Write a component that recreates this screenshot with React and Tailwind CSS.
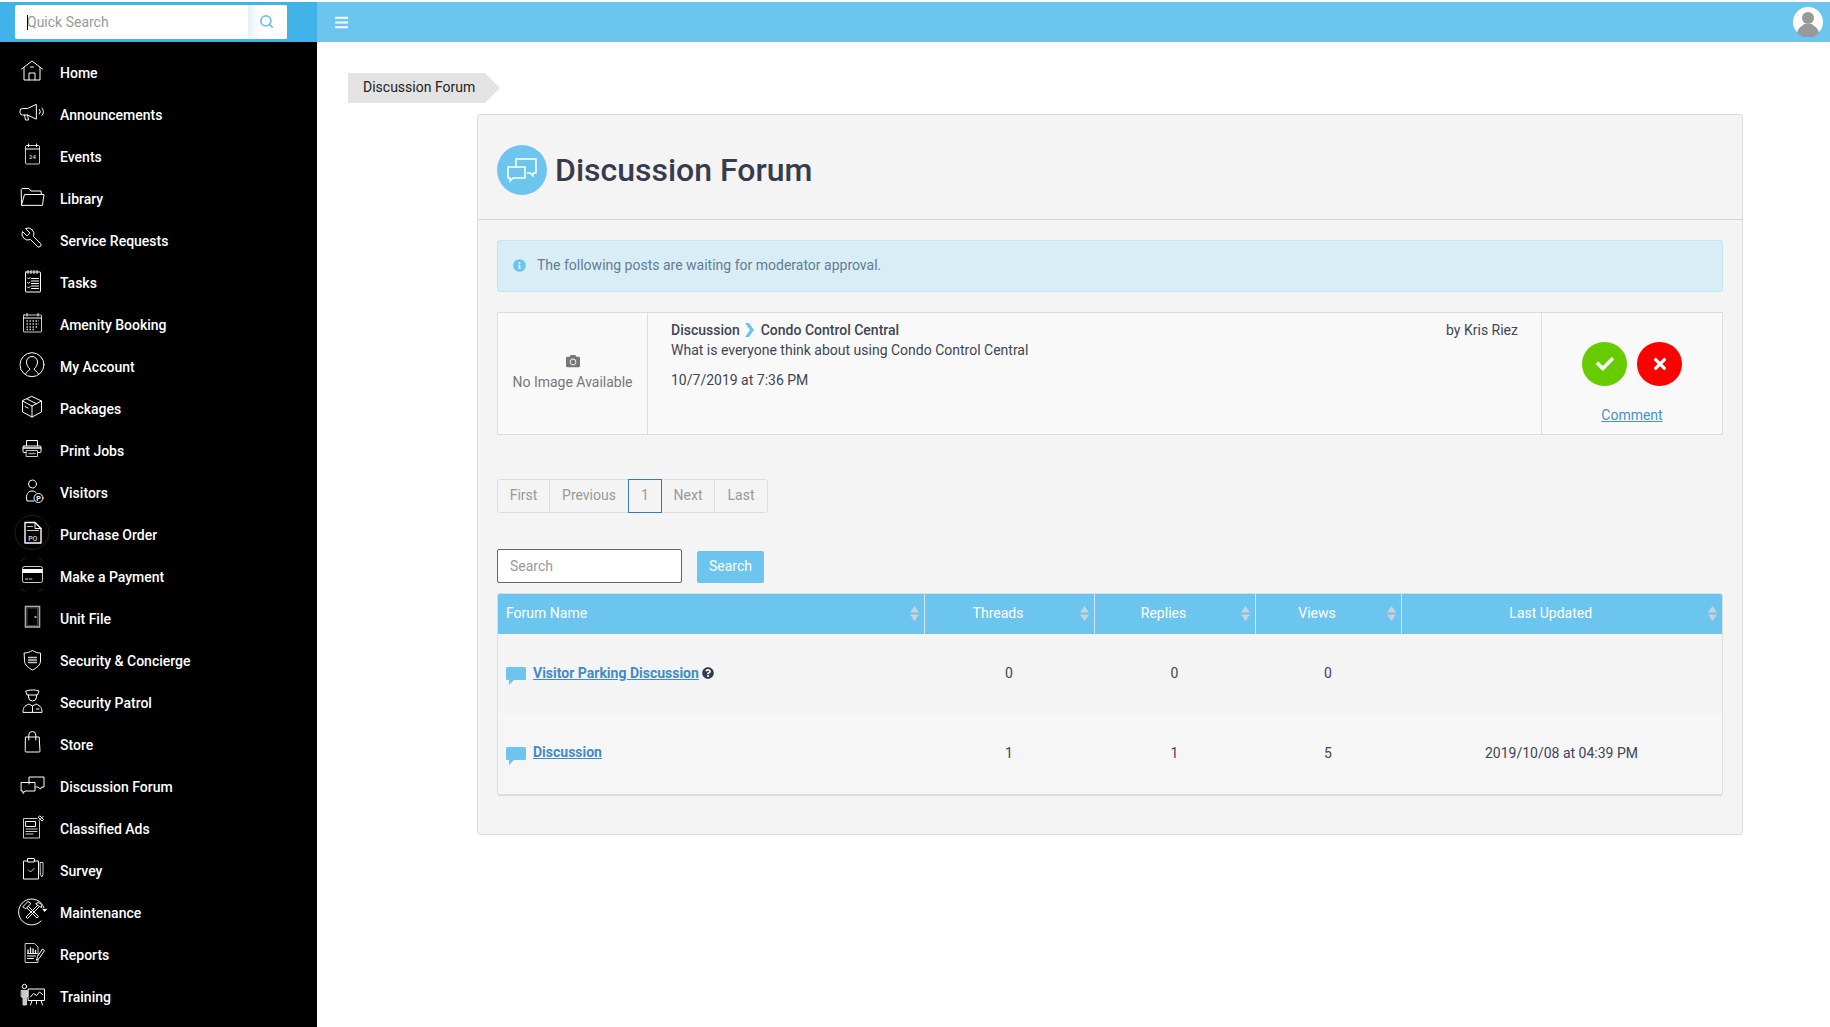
import { Search } from "lucide-react";
import {
  FaBars,
  FaCamera,
  FaCheck,
  FaInfoCircle,
  FaQuestionCircle,
  FaTimes,
} from "react-icons/fa";

const Ico = ({ children }) => (
  <svg
    width="32"
    height="32"
    viewBox="0 0 32 32"
    fill="none"
    stroke="#fff"
    strokeWidth="1"
    strokeLinejoin="round"
    strokeLinecap="round"
    className="shrink-0 -translate-y-[2px] overflow-visible"
  >
    {children}
  </svg>
);

const tiny = { fontFamily: "Roboto, sans-serif", stroke: "none", fill: "#ddd" };

const menu = [
  {
    label: "Home",
    icon: (
      <>
        <path d="M5.500 14 16 6l10.500 8" />
        <path d="M8 12.500V25h16V12.500" />
        <path d="M13 25v-7h6v7M14.500 12h3" />
      </>
    ),
  },
  {
    label: "Announcements",
    icon: (
      <>
        <path d="M20 7.500 11.500 11.500H6.500a2.500 2.500 0 0 0-2.500 2.500v1.500a2.500 2.500 0 0 0 2.500 2.500h5l8.500 4z" />
        <path d="M8.500 18l1 5h3l-1-5" />
        <path d="M23.500 12.500a3.500 3.500 0 0 1 0 4.500M26 11a6 6 0 0 1 0 7.500" />
      </>
    ),
  },
  {
    label: "Events",
    icon: (
      <>
        <rect x="9.500" y="6.500" width="14" height="18.500" rx="1" stroke="#ccc" />
        <path d="M9.500 10h14M12.500 5v2.500M20.500 5v2.500" />
        <text x="16.500" y="20" fontSize="6" textAnchor="middle" style={tiny}>
          24
        </text>
      </>
    ),
  },
  {
    label: "Library",
    icon: (
      <>
        <path d="M5.500 24 5.200 8.500 6 7.500h7l2 2.500h10l.5 3.500" />
        <path d="M5.500 24 8.500 13.500H28L26.500 24z" />
      </>
    ),
  },
  {
    label: "Service Requests",
    icon: (
      <path
        transform="translate(28 3) scale(-1 1)"
        d="M14.700 6.300a1 1 0 0 0 0 1.400l1.600 1.600a1 1 0 0 0 1.400 0l3.770-3.770a6 6 0 0 1-7.940 7.940l-6.910 6.910a2.120 2.120 0 0 1-3-3l6.910-6.910a6 6 0 0 1 7.940-7.940l-3.760 3.760z"
      />
    ),
  },
  {
    label: "Tasks",
    icon: (
      <>
        <rect x="9.500" y="7" width="15" height="20" rx="0.500" />
        <path d="M12 5.500v3M15 5.500v3M18 5.500v3M21 5.500v3" />
        <path d="M11.500 13l1 1 1.500-1.500M11.500 17.500l1 1 1.500-1.500M11.500 22l1 1 1.500-1.500" />
        <path d="M15.500 13.500h7M15.500 16h7M15.500 18.500h7M15.500 21h7M15.500 23.500h7" />
      </>
    ),
  },
  {
    label: "Amenity Booking",
    icon: (
      <>
        <rect x="7.500" y="8" width="18" height="17" rx="0.500" stroke="#ccc" />
        <path d="M7.500 11h18M11 6.500v2.500M22 6.500v2.500" />
        <path
          d="M10.500 14h1.500M13.500 14h1.500M16.500 14h1.500M19.500 14h1.500M22.500 14h.5M10.500 17h1.500M13.500 17h1.500M16.500 17h1.500M19.500 17h1.500M22.500 17h.5M10.500 20h1.500M13.500 20h1.500M16.500 20h1.500M19.500 20h1.500M10.500 22.500h1.500M13.500 22.500h1.500M16.500 22.500h1.500"
          stroke="#ccc"
          strokeWidth="1.500"
          strokeLinecap="butt"
        />
      </>
    ),
  },
  {
    label: "My Account",
    icon: (
      <>
        <circle cx="16" cy="15.700" r="12" />
        <path d="M9.500 25c.5-2.500 4-3 4.500-5-2-2-3.500-4-3.500-7a5.500 5.500 0 0 1 11 0c0 3-1.500 5-3.500 7 .5 2 4 2.500 4.500 5" />
      </>
    ),
  },
  {
    label: "Packages",
    icon: (
      <>
        <path d="M16 5.500 25.500 10v11L16 26l-9.500-5V10z" />
        <path d="M6.500 10 16 15l9.500-5M16 15v11M11 8l9.500 4.800" />
        <path d="M9 15.500l3 1.500" />
      </>
    ),
  },
  {
    label: "Print Jobs",
    icon: (
      <>
        <path d="M10.500 13V7.500h11V13" />
        <rect x="7" y="13" width="18" height="6.500" rx="1" />
        <path d="M7.500 15h17" strokeWidth="1.500" />
        <rect x="10.500" y="17.500" width="11" height="6" fill="#000" stroke="#ccc" />
        <path d="M13 20.500h6" stroke="#999" strokeWidth="1.500" />
      </>
    ),
  },
  {
    label: "Visitors",
    icon: (
      <>
        <circle cx="16.500" cy="9" r="4" />
        <path d="M18 26h-7l-.5-3c0-5 2.500-7 5.500-7 1.500 0 3 .5 4 1.500" />
        <circle cx="22.500" cy="23" r="4.500" fill="#000" />
        <text x="22.500" y="25.500" fontSize="7" fontWeight="700" textAnchor="middle" style={{ ...tiny, fill: "#fff" }}>
          P
        </text>
      </>
    ),
  },
  {
    label: "Purchase Order",
    icon: (
      <>
        <circle cx="16" cy="15.500" r="17" stroke="#222" strokeDasharray="2 1" />
        <path d="M9 5.500h10l6 6V26H9z" strokeWidth="1.400" />
        <path d="M19 5.500v6h6" />
        <path d="M11.500 9.500h5M11.500 13.500h11" strokeWidth="1.200" stroke="#ccc" />
        <text x="16.800" y="23.500" fontSize="7" textAnchor="middle" style={tiny}>
          PO
        </text>
      </>
    ),
  },
  {
    label: "Make a Payment",
    icon: (
      <>
        <path d="M5 2 9 -1M27 2l-4-3M5 30l4 3M27 30l-4 3" stroke="#222" />
        <rect x="6.500" y="7.500" width="20" height="16" rx="2" stroke="#ccc" />
        <rect x="6.500" y="10" width="20" height="4" fill="#fff" stroke="none" />
        <path d="M9.500 20h2.500M13.500 20h2.500" stroke="#ccc" />
      </>
    ),
  },
  {
    label: "Unit File",
    icon: (
      <>
        <rect x="9.500" y="5.500" width="14" height="20.500" stroke="#aaa" strokeWidth="1.600" strokeLinejoin="miter" />
        <rect x="11.500" y="7" width="10" height="17.500" stroke="#444" />
        <path d="M18.500 16h2" strokeWidth="1.300" strokeLinecap="butt" />
      </>
    ),
  },
  {
    label: "Security & Concierge",
    icon: (
      <>
        <path d="M8.500 10c3 0 5.500-1 8-2.500 2.500 1.500 5 2.500 8 2.500v8c0 4-4 7-8 9-4-2-8-5-8-9z" />
        <path d="M12.500 14.500h8M12.500 17h8M12.500 19.500h8" strokeWidth="1.400" stroke="#ccc" />
      </>
    ),
  },
  {
    label: "Security Patrol",
    icon: (
      <>
        <path d="M10 6c4-1.500 9-1.500 13 0l-1.500 4h-10z" />
        <path d="M12.500 10v2a4 4 0 0 0 8 0v-2" />
        <path d="M7 27c0-4 1-6 6-8l3.500 2 3.500-2c5 2 6 4 6 8z" />
        <path d="M16.500 21v6M20.500 24h2.500" />
      </>
    ),
  },
  {
    label: "Store",
    icon: (
      <>
        <path d="M9.800 10h13.400l.8 14.200a.8.8 0 0 1-.8.8H10a.8.8 0 0 1-.8-.8z" />
        <path d="M12.800 13V8a3.500 3.500 0 0 1 7 0v5" />
      </>
    ),
  },
  {
    label: "Discussion Forum",
    icon: (
      <>
        <path d="M13 15V8h15v10h-2.500l-1 2-2.500-2h-2" />
        <path d="M5.500 13.500h13.500V22H9l-2 2.500V22H5.500z" />
      </>
    ),
  },
  {
    label: "Classified Ads",
    icon: (
      <>
        <path d="M23.500 10.500V27H7.500V7.500H21" stroke="#ccc" />
        <rect x="10" y="10.500" width="9.500" height="5" />
        <path d="M10 18h11M10 20.500h11M10 23h7" stroke="#ccc" />
        <path d="M23 9.500 27 5.500M24 5l3.500 3.500-1.500 1.500-3.500-3.500z" />
      </>
    ),
  },
  {
    label: "Survey",
    icon: (
      <>
        <path d="M12 8H7.500v18h15V8H18" />
        <rect x="11.500" y="5.500" width="7" height="3.500" rx="0.500" />
        <path d="M12.500 17l2 2 3.500-3.500" stroke="#ccc" />
        <path d="M24.500 9.500h2.500v12l-1.250 2.500-1.250-2.500z" stroke="#ccc" />
      </>
    ),
  },
  {
    label: "Maintenance",
    icon: (
      <>
        <path d="M28 13A13 13 0 1 0 25 26" />
        <path d="M27 14l1.500 2.500 2-2.500" fill="#fff" />
        <path d="M11 10l11.500 11.500-1.500 1.500L9.500 11.500" />
        <path d="M7 11.500 12 6.500l3 2-5 5z" fill="#000" />
        <path d="M22 10 10 22l1.500 1.500L23.500 11.500" />
        <path d="M20 8.500a3.500 3.500 0 0 1 5.500 4l-2-1-1.500-1z" fill="#000" />
      </>
    ),
  },
  {
    label: "Reports",
    icon: (
      <>
        <path d="M9.500 6.500h9l3.500 3.500v15.500H9.500z" stroke="#ccc" />
        <path d="M12 15.500V13M14.500 15.500V11M17 15.500v-3.500M19.500 15.500v-2" strokeWidth="1.300" />
        <path d="M11.500 16.500h9.500M11.500 19h8M11.500 21.500h6" />
        <path d="M20.500 23l1-3.500L26.500 12l2 1.500-5 7.500z" fill="#000" />
      </>
    ),
  },
  {
    label: "Training",
    icon: (
      <>
        <circle cx="8.500" cy="7.500" r="2.200" />
        <path d="M5.500 11.500h6v6.500l-1 .5V26h-3.500v-7.500l-1.500-.5z" fill="#ccc" stroke="#ccc" />
        <rect x="12.500" y="10" width="16" height="11.500" />
        <path d="M14.500 18l3-3.500 3 2 3-3.500 3 2.500" />
        <path d="M16 21.500 14.500 26M25 21.500l1.500 4.500M20.500 21.500V25" />
      </>
    ),
  },
];

const SortArrows = () => (
  <svg width="9" height="15" viewBox="0 0 9 15" className="absolute right-[5px] top-[12px]">
    <path d="M4.500 0 9 6.500H0z" fill="#c9d3da" />
    <path d="M0 8.500h9L4.500 15z" fill="#c9d3da" />
  </svg>
);

const Bubble = () => (
  <svg width="20" height="18" viewBox="0 0 20 18" className="shrink-0">
    <path d="M1.500 0h17A1.500 1.500 0 0 1 20 1.500v10a1.500 1.500 0 0 1-1.500 1.500H8l-5 5v-5H1.500A1.500 1.500 0 0 1 0 11.500v-10A1.500 1.500 0 0 1 1.500 0z" fill="#6cc5ef" />
  </svg>
);

const columns = [
  { name: "Forum Name", width: "w-[426px]", align: "text-left pl-[8px]" },
  { name: "Threads", width: "w-[170px]", align: "text-center pr-[22px]" },
  { name: "Replies", width: "w-[161px]", align: "text-center pr-[22px]" },
  { name: "Views", width: "w-[146px]", align: "text-center pr-[22px]" },
  { name: "Last Updated", width: "w-[321px]", align: "text-center pr-[22px]" },
];

const rows = [
  { name: "Visitor Parking Discussion", help: true, threads: 0, replies: 0, views: 0, updated: "", bg: "bg-[#f4f4f4]" },
  { name: "Discussion", help: false, threads: 1, replies: 1, views: 5, updated: "2019/10/08 at 04:39 PM", bg: "bg-[#f6f6f6]" },
];

const pages = [
  { label: "First", width: "w-[53px]" },
  { label: "Previous", width: "w-[80px]" },
  { label: "1", width: "w-[34px]", active: true },
  { label: "Next", width: "w-[54px]" },
  { label: "Last", width: "w-[54px]" },
];

export default function App() {
  return (
    <div className="h-screen overflow-hidden bg-white pt-[2px] font-['Roboto',sans-serif] text-[14px] text-[#3f4555]">
      <header className="flex h-[40px]">
        <div className="flex w-[317px] shrink-0 items-center bg-[#41b3e9] pl-[15px]">
          <div className="relative flex h-[34px] w-[272px] overflow-hidden rounded-[2px] bg-white">
            <input
              placeholder="Quick Search"
              className="w-[233px] pl-[12px] text-[14px] outline-none placeholder:text-[#999]"
            />
            <span className="absolute left-[12px] top-[10px] h-[15px] w-px bg-black" />
            <div className="flex flex-1 items-center justify-center bg-gradient-to-r from-[#e3f1fc] to-white to-30% pb-[2px] pr-[2px]">
              <Search size={15} strokeWidth={3} className="text-[#6cc5ef]" />
            </div>
          </div>
        </div>
        <div className="flex flex-1 items-center justify-between bg-[#6cc5ef] pl-[17px] pr-[7px]">
          <FaBars size={15} className="text-white" />
          <svg width="30" height="30" viewBox="0 0 30 30">
            <circle cx="15" cy="15" r="15" fill="#fff" />
            <circle cx="15" cy="11" r="6" fill="#999" />
            <path d="M4 26c1-6 6-7 7-9h8c1 2 6 3 7 9a15 15 0 0 1-22 0z" fill="#999" />
          </svg>
        </div>
      </header>

      <div className="flex h-[985px]">
        <nav className="w-[317px] shrink-0 bg-black pt-[10px] font-medium text-white">
          {menu.map((item) => (
            <div key={item.label} className="flex h-[42px] items-center gap-[12px] pl-[16px]">
              <Ico>{item.icon}</Ico>
              <span>{item.label}</span>
            </div>
          ))}
        </nav>

        <main className="flex-1 pl-[31px] pt-[31px]">
          <div className="flex h-[30px] w-[152px] items-center bg-[#e3e3e3] pb-[2px] pl-[15px] text-[#222] [clip-path:polygon(0_0,137px_0,100%_50%,137px_100%,0_100%)]">
            Discussion Forum
          </div>

          <section className="ml-[129px] mt-[11px] h-[721px] w-[1266px] rounded-[3px] border border-[#ddd] bg-[#f4f4f4]">
            <div className="flex h-[105px] gap-[8px] border-b border-[#d5d5d5] pl-[19px] pt-[30px]">
              <div className="flex h-[50px] w-[50px] items-center justify-center rounded-full bg-[#6cc5ef]">
                <svg width="34" height="28" viewBox="0 0 34 28" fill="none" stroke="#fff" strokeWidth="1.500">
                  <path d="M11 12V3h20v14h-3v3l-3-3h-3" />
                  <path d="M3 11h17v11H8l-3 3v-3H3z" />
                </svg>
              </div>
              <h1 className="text-[32px] font-medium leading-[50px] text-[#363b4e]">Discussion Forum</h1>
            </div>

            <div className="pl-[19px] pt-[20px]">
              <div className="flex h-[52px] w-[1226px] items-center gap-[11px] rounded-[3px] border border-[#bce8f1] bg-[#d9edf7] pb-[2px] pl-[15px] text-[#5f7d93]">
                <FaInfoCircle size={13} className="text-[#6cc5ef]" />
                <span>The following posts are waiting for moderator approval.</span>
              </div>

              <div className="mt-[20px] flex h-[123px] w-[1226px] border border-[#ddd] bg-[#f9f9f9]">
                <div className="flex w-[150px] shrink-0 flex-col items-center border-r border-[#ddd] pt-[41px] text-[#777]">
                  <FaCamera size={14} />
                  <span className="mt-[4px]">No Image Available</span>
                </div>
                <div className="relative flex-1 pl-[23px] pt-[7px]">
                  <div className="flex h-[20px] items-center font-medium">
                    <span>Discussion</span>
                    <svg width="10" height="14" viewBox="0 0 10 14" className="ml-[5px] mr-[6px]">
                      <path d="M0 0h4l5 7-5 7H0l5-7z" fill="#6cc5ef" />
                    </svg>
                    <span>Condo Control Central</span>
                  </div>
                  <div className="h-[20px] leading-[20px]">What is everyone think about using Condo Control Central</div>
                  <div className="mt-[10px] leading-[20px]">10/7/2019 at 7:36 PM</div>
                  <span className="absolute right-[23px] top-[7px] leading-[20px]">by Kris Riez</span>
                </div>
                <div className="flex w-[181px] shrink-0 flex-col items-center border-l border-[#ddd] pt-[29px]">
                  <div className="flex gap-[10px]">
                    <button className="flex h-[44px] w-[45px] items-center justify-center rounded-full bg-[#66cc00] text-white">
                      <FaCheck size={18} />
                    </button>
                    <button className="flex h-[44px] w-[45px] items-center justify-center rounded-full bg-[#ff0000] text-white">
                      <FaTimes size={18} />
                    </button>
                  </div>
                  <a className="mt-[19px] text-[#4a8fd4] underline">Comment</a>
                </div>
              </div>

              <div className="mt-[44px] flex h-[34px] w-[272px]">
                {pages.map((page, i) => (
                  <span
                    key={page.label}
                    className={`flex items-center justify-center border pb-[2px] ${page.width} ${
                      page.active ? "relative z-10 border-[#337ab7] text-[#999]" : "border-[#ddd] text-[#999]"
                    } ${i === 0 ? "rounded-l-[3px]" : "-ml-px"} ${i === 4 ? "rounded-r-[3px]" : ""}`}
                  >
                    {page.label}
                  </span>
                ))}
              </div>

              <div className="mt-[36px] flex items-end gap-[15px]">
                <input
                  placeholder="Search"
                  className="h-[34px] w-[185px] rounded-[2px] border border-[#666] bg-white pl-[12px] text-[14px] outline-none placeholder:text-[#999]"
                />
                <button className="h-[32px] w-[67px] rounded-[2px] bg-[#6cc5ef] pb-[2px] text-white">Search</button>
              </div>

              <div className="mt-[10px] w-[1226px] overflow-hidden rounded-[3px] border border-b-2 border-[#ddd]">
                <table className="w-full table-fixed border-collapse">
                  <thead>
                    <tr className="h-[40px] bg-[#6cc5ef] text-white">
                      {columns.map((col, i) => (
                        <th
                          key={col.name}
                          className={`relative pb-[2px] font-normal ${col.width} ${col.align} ${i ? "border-l border-[#cfe6f3]" : ""}`}
                        >
                          {col.name}
                          <SortArrows />
                        </th>
                      ))}
                    </tr>
                  </thead>
                  <tbody>
                    {rows.map((row) => (
                      <tr key={row.name} className={`h-[80px] ${row.bg}`}>
                        <td className="pl-[8px]">
                          <div className="flex items-start gap-[7px]">
                            <div className="pt-[3px]">
                              <Bubble />
                            </div>
                            <a className={`font-bold leading-[16px] text-[#428bca] underline ${row.help ? "mt-[1px]" : ""}`}>
                              {row.name}
                            </a>
                            {row.help && <FaQuestionCircle size={12} className="-ml-[4px] mt-[3px] text-[#333b4d]" />}
                          </div>
                        </td>
                        <td className="pb-[2px] text-center">{row.threads}</td>
                        <td className="pb-[2px] text-center">{row.replies}</td>
                        <td className="pb-[2px] text-center">{row.views}</td>
                        <td className="pb-[2px] text-center">{row.updated}</td>
                      </tr>
                    ))}
                  </tbody>
                </table>
              </div>
            </div>
          </section>
        </main>
      </div>
    </div>
  );
}
